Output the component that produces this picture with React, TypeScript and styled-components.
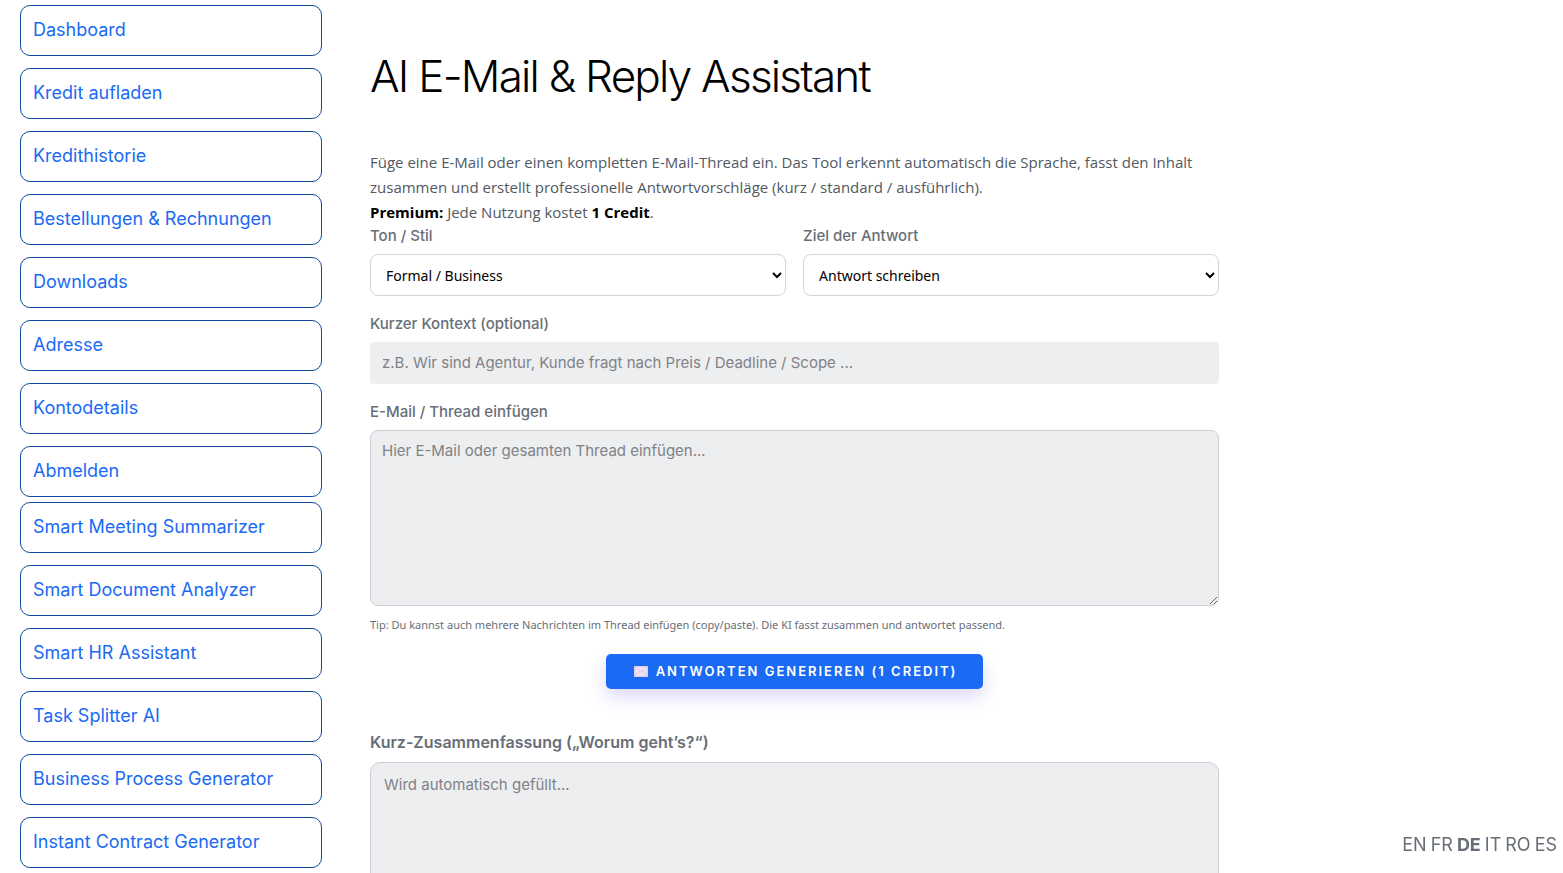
import React from "react";
import styled, { createGlobalStyle } from "styled-components";

const GlobalStyle = createGlobalStyle`
  *, *::before, *::after { box-sizing: border-box; }
  html { scrollbar-width: none; }
  body {
    margin: 0;
    background: #ffffff;
    color: #686e77;
    font-family: Inter, "Liberation Sans", sans-serif;
    font-size: 15px;
  }
`;

const Page = styled.div`
  display: grid;
  grid-template-columns: 302px minmax(0, 1fr);
  align-items: start;
  gap: 48px;
  padding: 5px 22% 0 20px;
`;

const Sidebar = styled.nav`
  display: flex;
  flex-direction: column;
  gap: 5px;
`;

const NavGroup = styled.ul`
  display: flex;
  flex-direction: column;
  gap: 12px;
  margin: 0;
  padding: 0;
  list-style: none;
`;

const NavLink = styled.a`
  display: flex;
  align-items: center;
  height: 51px;
  padding: 0 12px 2px;
  border: 1px solid #0f4a9e;
  border-radius: 10px;
  color: #1a6af4;
  font-size: 18px;
  line-height: 24px;
  text-decoration: none;
`;

const Main = styled.main`
  display: flex;
  flex-direction: column;
`;

const Title = styled.h1`
  margin: 41px 0 44px;
  color: #000000;
  font-size: 44px;
  font-weight: 350;
  letter-spacing: -0.04em;
  line-height: 60px;
`;

const Intro = styled.p`
  margin: 0 0 -1px;
  color: #515962;
  font-family: "Open Sans", "Noto Sans", sans-serif;
  font-size: 15px;
  line-height: 25px;
`;

const Strong = styled.strong`
  color: #000000;
  font-weight: 700;
`;

const FieldRow = styled.div`
  display: grid;
  grid-template-columns: 1fr 1fr;
  gap: 17px;
`;

const Field = styled.div`
  display: flex;
  flex-direction: column;
  margin-bottom: 16px;
`;

const Label = styled.label<{ $heading?: boolean }>`
  margin-bottom: ${(p) => (p.$heading ? "8px" : "6px")};
  font-size: ${(p) => (p.$heading ? "16px" : "15px")};
  font-weight: ${(p) => (p.$heading ? 600 : 500)};
  line-height: 24px;
`;

const Select = styled.select`
  width: 100%;
  height: 42px;
  padding: 0 0 0 11px;
  border: 1px solid #d1d5db;
  border-radius: 8px;
  background: #ffffff;
  color: #000000;
  font-family: "Noto Sans", "Open Sans", sans-serif;
  font-size: 14px;
`;

const TextInput = styled.input`
  width: 100%;
  height: 42px;
  padding: 0 12px 2px;
  border: 0;
  border-radius: 4px;
  background: #edeef0;
  font: inherit;
  &::placeholder { color: #7f8286; }
`;

const TextArea = styled.textarea<{ $output?: boolean }>`
  display: block;
  width: 100%;
  height: ${(p) => (p.$output ? "150px" : "176px")};
  padding: ${(p) => (p.$output ? "10px 13px" : "8px 11px")};
  border: 1px solid #ccd0d6;
  border-radius: ${(p) => (p.$output ? "10px" : "8px")};
  background: #edeef0;
  font: inherit;
  line-height: 24px;
  resize: vertical;
  &::placeholder { color: #7f8286; }
`;

const Tip = styled.p`
  margin: -6px 0 20px;
  font-family: "Noto Sans", "Open Sans", sans-serif;
  font-size: 11px;
  line-height: 18px;
`;

const GenerateButton = styled.button`
  display: flex;
  align-items: center;
  align-self: center;
  gap: 8px;
  height: 35px;
  margin-bottom: 41px;
  padding: 0 26px 1px 28px;
  border: 0;
  border-radius: 5px;
  background: #1a6af4;
  box-shadow: 0 8px 18px rgba(80, 60, 220, 0.2);
  color: #ffffff;
  font-family: inherit;
  font-size: 13px;
  font-weight: 600;
  letter-spacing: 2px;
  text-transform: uppercase;
`;

const Languages = styled.nav`
  position: fixed;
  right: 6px;
  bottom: 16px;
  display: flex;
  gap: 4px;
  font-size: 18px;
  line-height: 24px;
`;

const LanguageLink = styled.a<{ $active?: boolean }>`
  color: #686e77;
  font-weight: ${(p) => (p.$active ? 700 : 400)};
  text-decoration: none;
`;

const accountLinks = [
  "Dashboard",
  "Kredit aufladen",
  "Kredithistorie",
  "Bestellungen & Rechnungen",
  "Downloads",
  "Adresse",
  "Kontodetails",
  "Abmelden",
];

const toolLinks = [
  "Smart Meeting Summarizer",
  "Smart Document Analyzer",
  "Smart HR Assistant",
  "Task Splitter AI",
  "Business Process Generator",
  "Instant Contract Generator",
];

const languages = ["EN", "FR", "DE", "IT", "RO", "ES"];

function Envelope() {
  return (
    <svg width="14" height="11" viewBox="0 0 14 11" aria-hidden="true">
      <rect x="0.5" y="0.5" width="13" height="10" fill="#efe0f2" stroke="#dccbe6" />
      <path d="M1 1l6 5 6-5M1 10l4.500-5M13 10L8.500 5" fill="none" stroke="#d6c0dc" strokeWidth="0.6" />
    </svg>
  );
}

function NavItems({ items }: { items: string[] }) {
  return (
    <NavGroup>
      {items.map((item) => (
        <li key={item}>
          <NavLink href="#">{item}</NavLink>
        </li>
      ))}
    </NavGroup>
  );
}

export default function App() {
  return (
    <>
      <GlobalStyle />
      <Page>
        <Sidebar aria-label="Konto">
          <NavItems items={accountLinks} />
          <NavItems items={toolLinks} />
        </Sidebar>
        <Main>
          <Title>AI E-Mail &amp; Reply Assistant</Title>
          <Intro>
            Füge eine E-Mail oder einen kompletten E-Mail-Thread ein. Das Tool erkennt automatisch die
            Sprache, fasst den Inhalt zusammen und erstellt professionelle Antwortvorschläge (kurz /
            standard / ausführlich).
            <br />
            <Strong>Premium:</Strong> Jede Nutzung kostet <Strong>1 Credit</Strong>.
          </Intro>
          <FieldRow>
            <Field>
              <Label htmlFor="tone">Ton / Stil</Label>
              <Select id="tone">
                <option>Formal / Business</option>
              </Select>
            </Field>
            <Field>
              <Label htmlFor="goal">Ziel der Antwort</Label>
              <Select id="goal">
                <option>Antwort schreiben</option>
              </Select>
            </Field>
          </FieldRow>
          <Field>
            <Label htmlFor="context">Kurzer Kontext (optional)</Label>
            <TextInput
              id="context"
              placeholder="z.B. Wir sind Agentur, Kunde fragt nach Preis / Deadline / Scope ..."
            />
          </Field>
          <Field>
            <Label htmlFor="thread">E-Mail / Thread einfügen</Label>
            <TextArea id="thread" placeholder="Hier E-Mail oder gesamten Thread einfügen..." />
          </Field>
          <Tip>
            Tip: Du kannst auch mehrere Nachrichten im Thread einfügen (copy/paste). Die KI fasst
            zusammen und antwortet passend.
          </Tip>
          <GenerateButton type="button">
            <Envelope />
            Antworten generieren (1 Credit)
          </GenerateButton>
          <Field>
            <Label $heading htmlFor="summary">
              Kurz-Zusammenfassung („Worum geht’s?“)
            </Label>
            <TextArea $output id="summary" placeholder="Wird automatisch gefüllt..." />
          </Field>
        </Main>
      </Page>
      <Languages aria-label="Sprache">
        {languages.map((code) => (
          <LanguageLink key={code} href="#" $active={code === "DE"}>
            {code}
          </LanguageLink>
        ))}
      </Languages>
    </>
  );
}
